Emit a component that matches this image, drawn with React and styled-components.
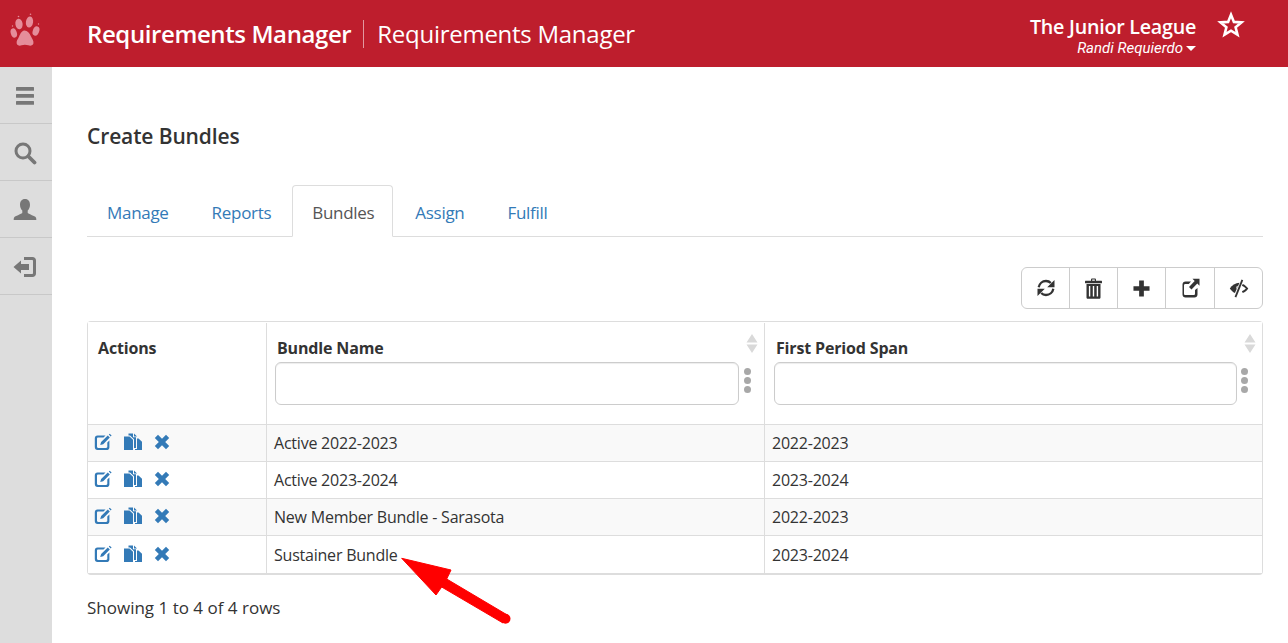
import React from "react";
import styled, { createGlobalStyle } from "styled-components";

const Global = createGlobalStyle`
  html, body { margin: 0; padding: 0; background: #fff; }
  body { font-family: "Open Sans", "Noto Sans", "Liberation Sans", sans-serif; color: #333; font-size: 16px; }
  * { box-sizing: border-box; }
`;

const Page = styled.div`
  position: relative;
  width: 1288px;
  height: 643px;
  overflow: hidden;
  display: grid;
  grid-template-rows: 67px 1fr;
  grid-template-columns: 52px 1fr;
`;
const Header = styled.header`
  grid-column: 1 / 3;
  background: #be1e2d;
  color: #fff;
  display: flex;
  align-items: center;
`;
const LogoCell = styled.div`
  width: 87px;
  height: 100%;
  display: flex;
  padding: 13px 0 0 10px;
`;
const AppTitle = styled.div`
  display: flex;
  align-items: center;
  font-size: 24px;
  height: 28px;
  margin-top: 1px;
`;
const AppStrong = styled.span`
  font-weight: 600;
  letter-spacing: -0.4px;
  padding-right: 12px;
  border-right: 1px solid rgba(255, 255, 255, 0.55);
  line-height: 28px;
`;
const AppSub = styled.span`
  padding-left: 13px;
  letter-spacing: -0.27px;
  line-height: 28px;
`;
const UserBlock = styled.div`
  margin-left: auto;
  display: flex;
  flex-direction: column;
  align-items: flex-end;
  margin-top: 3px;
`;
const League = styled.div`
  font-size: 19.7px;
  font-weight: 600;
  letter-spacing: -0.25px;
  line-height: 26px;
  white-space: nowrap;
`;
const UserName = styled.div`
  display: flex;
  align-items: center;
  gap: 3px;
  font-family: "Roboto", sans-serif;
  font-style: italic;
  font-size: 15px;
  line-height: 17px;
  white-space: nowrap;
`;
const Caret = styled.i`
  width: 0;
  height: 0;
  border-left: 5px solid transparent;
  border-right: 5px solid transparent;
  border-top: 5px solid #fff;
  margin-top: 1px;
`;
const StarCell = styled.div`
  width: 92px;
  height: 100%;
  padding: 11px 0 0 21px;
`;

const Sidebar = styled.nav`
  background: #dddddd;
`;
const SideItem = styled.div`
  height: 57px;
  border-bottom: 1px solid #c8c8c8;
  display: flex;
  align-items: center;
  justify-content: center;
  color: #777;
  padding: 2px 3px 0 0;
`;

const Main = styled.main`
  padding: 56px 25px 0 35px;
  min-width: 0;
`;
const Title = styled.h1`
  margin: 0;
  font-size: 21px;
  font-weight: 600;
  letter-spacing: -0.12px;
  line-height: 26px;
  color: #333;
`;
const Tabs = styled.div`
  display: flex;
  margin-top: 36px;
  height: 52px;
  border-bottom: 1px solid #ddd;
`;
const Tab = styled.div`
  height: 52px;
  padding: 3px ${p => p.$pr || 20}px 0 ${p => p.$pl || 20}px;
  display: flex;
  align-items: center;
  font-size: 17px;
  letter-spacing: -0.3px;
  color: ${p => (p.$active ? "#555" : "#337ab7")};
  background: ${p => (p.$active ? "#fff" : "transparent")};
  border: 1px solid ${p => (p.$active ? "#ddd" : "transparent")};
  border-bottom-color: ${p => (p.$active ? "#fff" : "transparent")};
  border-radius: 4px 4px 0 0;
  &:first-child { margin-left: -1px; }
`;
const ToolRow = styled.div`
  display: flex;
  justify-content: flex-end;
  margin-top: 30px;
`;
const ToolGroup = styled.div`
  display: flex;
  height: 42px;
  border: 1px solid #ccc;
  border-radius: 6px;
`;
const ToolBtn = styled.div`
  width: ${p => p.$w}px;
  display: flex;
  align-items: center;
  justify-content: center;
  color: #333;
  & + & { border-left: 1px solid #ccc; }
`;
const TableWrap = styled.div`
  margin-top: 12px;
  border: 1px solid #ddd;
  border-bottom-width: 2px;
  border-radius: 4px;
`;
const Row = styled.div`
  display: grid;
  grid-template-columns: 178px 498px 1fr;
  height: ${p => p.$h || 37}px;
  line-height: 36px;
  background: ${p => (p.$striped ? "#f9f9f9" : "#fff")};
  border-top: 1px solid ${p => (p.$first ? "transparent" : "#ddd")};
  &:last-child { height: 38px; line-height: 38px; }
`;
const HeadCell = styled.div`
  position: relative;
  padding: ${p => (p.$plain ? "15px 10px" : `15px 8px 0 ${p.$left || 8}px`)};
  & + & { border-left: 1px solid #ddd; }
`;
const HeadLabel = styled.div`
  font-weight: 700;
  font-size: 16px;
  letter-spacing: -0.16px;
  line-height: 21px;
  padding-left: ${p => (p.$inset ? 2 : 0)}px;
`;
const FilterRow = styled.div`
  display: flex;
  align-items: center;
  margin-top: 3px;
`;
const FilterInput = styled.input`
  flex: none;
  width: ${p => p.$w}px;
  height: 43px;
  border: 1px solid #ccc;
  border-radius: 6px;
  box-shadow: inset 0 1px 1px rgba(0, 0, 0, 0.075);
  background: #fff;
`;
const Kebab = styled.div`
  margin-left: ${p => p.$ml || 4}px;
  width: 8px;
  display: flex;
  flex-direction: column;
  gap: 2px;
  align-items: center;
  margin-top: -7px;
  & > i {
    width: 7px;
    height: 7px;
    border-radius: 50%;
    background: #a8a8a8;
  }
`;
const SortMark = styled.svg`
  position: absolute;
  top: 11px;
  right: 6px;
`;
const Cell = styled.div`
  padding: 0 7px;
  font-size: 16px;
  letter-spacing: -0.22px;
  white-space: nowrap;
  & + & { border-left: 1px solid #ddd; }
`;
const ActionCell = styled(Cell)`
  display: flex;
  align-items: center;
  gap: 12px;
  padding: 0 0 3px 6px;
  color: #337ab7;
`;
const Footer = styled.div`
  margin-top: 21px;
  font-size: 17px;
  line-height: 24px;
`;
const Arrow = styled.svg`
  position: absolute;
  left: 390px;
  top: 550px;
`;

const Paw = () => (
  <svg width="32" height="38" viewBox="0 0 32 38" fill="#e58d9a" aria-hidden="true">
    <ellipse cx="9" cy="11" rx="3.6" ry="5.4" transform="rotate(-10 9 11)" />
    <ellipse cx="19.5" cy="9" rx="3.6" ry="5.6" transform="rotate(8 19.5 9)" />
    <ellipse cx="3.8" cy="20" rx="3" ry="4.8" transform="rotate(-18 3.8 20)" />
    <ellipse cx="26" cy="18" rx="3.2" ry="4.8" transform="rotate(20 26 18)" />
    <path d="M14.5 17.5c3 0 5 2.500 6.500 6 1.200 2.600 3 4.400 2.400 7-.5 2-3 2.600-5 1.800-2.400-.9-4.600-.9-6.800 0-2.200.8-4.400.2-4.900-1.800-.6-2.600 1.200-4.200 2.400-7 1.400-3.400 3-6 5.800-6z" />
    <circle cx="8.500" cy="3.500" r=".8" /><circle cx="20.500" cy="1.200" r=".8" /><circle cx="2.500" cy="13" r=".7" /><circle cx="28.500" cy="11" r=".7" />
  </svg>
);
const Star = () => (
  <svg width="28" height="28" viewBox="0 0 28 28" aria-hidden="true">
    <path d="M14 3.800l2.900 7.100 7.600.5-5.900 4.900 1.900 7.400L14 19.700l-6.500 4 1.900-7.400-5.900-4.900 7.600-.5z" fill="none" stroke="#fff" strokeWidth="2.600" />
  </svg>
);
const Bars = () => (
  <svg width="20" height="20" viewBox="0 0 20 20" fill="currentColor" aria-hidden="true">
    <rect x="1" y="1" width="18" height="3.800" rx=".5" /><rect x="1" y="8" width="18" height="3.800" rx=".5" /><rect x="1" y="15" width="18" height="3.800" rx=".5" />
  </svg>
);
const Search = () => (
  <svg width="24" height="24" viewBox="0 0 24 24" fill="none" stroke="currentColor" aria-hidden="true">
    <circle cx="10" cy="10" r="7" strokeWidth="3" /><path d="M15.500 15.500l6 6" strokeWidth="3.800" strokeLinecap="round" />
  </svg>
);
const User = () => (
  <svg width="24" height="24" viewBox="0 0 24 24" fill="currentColor" aria-hidden="true">
    <path d="M12 1c3.400 0 5 2.600 5 5.800 0 2.400-.9 4.600-2.300 5.800v2.200c0 1 5.400 2.600 7.600 4 1 .7 1 2.200 1 3.200H.7c0-1 0-2.500 1-3.200 2.200-1.400 7.600-3 7.600-4v-2.200C7.900 11.400 7 9.200 7 6.800 7 3.600 8.600 1 12 1z" />
  </svg>
);
const LogIn = () => (
  <svg width="24" height="22" viewBox="0 0 24 22" fill="currentColor" aria-hidden="true">
    <path d="M11 1h8.500c2 0 3.500 1.500 3.500 3.500v13c0 2-1.500 3.500-3.500 3.500H11v-3h8c.6 0 1-.4 1-1V5c0-.6-.4-1-1-1h-8z" />
    <path d="M.5 11l7.500-6.500V8h8v6H8v3.500z" />
  </svg>
);
const Refresh = () => (
  <svg width="18" height="18" viewBox="0 0 18 18" aria-hidden="true">
    <g fill="none" stroke="currentColor" strokeWidth="2.300">
      <path d="M1.700 8.300C2.300 4.700 5.300 2 9 2c2 0 3.600.7 4.800 2" />
      <path d="M16.300 9.700C15.700 13.300 12.700 16 9 16c-2 0-3.600-.7-4.800-2" />
    </g>
    <path d="M17.500 1v7.300h-7.300zM.5 17V9.700h7.300z" fill="currentColor" />
  </svg>
);
const Trash = () => (
  <svg width="17" height="21" viewBox="0 0 17 21" fill="currentColor" aria-hidden="true">
    <path d="M6 3V1.500C6 .8 6.500.4 7.200.4h2.600c.7 0 1.200.4 1.200 1.100V3H9.800V1.600H7.200V3z" />
    <rect x="0" y="2.800" width="17" height="2.400" rx=".5" />
    <path fillRule="evenodd" d="M1.500 6h14v13.500c0 .8-.6 1.300-1.300 1.300H2.800c-.7 0-1.300-.5-1.300-1.300zM3.900 8v10.500h1.400V8zm3.900 0v10.500h1.400V8zm3.900 0v10.500h1.400V8z" />
  </svg>
);
const Plus = () => (
  <svg width="17" height="17" viewBox="0 0 18 18" fill="currentColor" aria-hidden="true">
    <path d="M6.500 .5h5v6h6v5h-6v6h-5v-6h-6v-5h6z" />
  </svg>
);
const Share = () => (
  <svg width="19" height="20" viewBox="0 0 19 20" fill="currentColor" aria-hidden="true">
    <path d="M3.500 3.500H10L7.800 6H4.300C3.600 6 3 6.600 3 7.300v8.400C3 16.400 3.600 17 4.300 17h8.400c.7 0 1.300-.6 1.300-1.300V12l2.500-2v6.500c0 1.700-1.300 3-3 3h-9c-1.700 0-3-1.300-3-3v-10c0-1.700 1.300-3 3-3z" />
    <path d="M11.500 .8h7v7l-2.200-2.200L10.500 11.500 8 9l5.700-6z" />
  </svg>
);
const EyeClose = () => (
  <svg width="20" height="19" viewBox="0 0 20 19" aria-hidden="true">
    <path fill="currentColor" d="M10.500 3.800C6.400 3.900 2.900 6.300.8 9.500c1.200 1.900 3 3.500 5.100 4.600z" />
    <path fill="#fff" d="M7.300 7.800L9 6.800 7.700 10.600z" />
    <path fill="currentColor" d="M12.500 .5l1.700.7-6.900 17.300-1.700-.7z" />
    <path fill="currentColor" d="M13.800 5c2.200 1 4.100 2.600 5.500 4.500-1.400 2-3.300 3.500-5.500 4.500l-.9-1.800c1.600-.7 3-1.700 4-2.700-1-1-2.400-2-4-2.700z" />
  </svg>
);
const Edit = () => (
  <svg width="18" height="18" viewBox="0 0 18 18" fill="currentColor" aria-hidden="true">
    <path d="M3.500 2.500h8L9.500 4.600H4.200C3.500 4.600 3 5.100 3 5.800v7.900c0 .7.500 1.200 1.200 1.200h7.900c.7 0 1.200-.5 1.200-1.200V9.500l2.100-2.100v7c0 1.700-1.300 2.600-3 2.600H3.500C1.800 17 .8 15.700.8 14V5.300c0-1.700 1-2.800 2.700-2.800z" />
    <path d="M13.800 2.600l2 2L9.200 11.200l-3 .9.900-3zM14.800 1.600l.9-.9 1.900 1.900-.9.900z" />
  </svg>
);
const Copy = () => (
  <svg width="18" height="18" viewBox="0 0 18 18" fill="currentColor" aria-hidden="true">
    <path d="M0 3.500h5.500L9 6.800V17H0z" />
    <path d="M4.500 .5H9v3.800h3V15h-2V6.300L6 2.500H4.500z" />
    <path d="M13 5.500h1.500L18 8.800V17h-7v-1h2z" />
    <path d="M10 .5l3 3h-3z" />
  </svg>
);
const Remove = () => (
  <svg width="17" height="16" viewBox="0 0 17 16" fill="currentColor" aria-hidden="true">
    <path d="M4 .8l4 4 4-4L15.200 4l-4 4 4 4-3.200 3.200-4-4-4 4L.8 12l4-4-4-4z" />
  </svg>
);
const Sort = () => (
  <SortMark width="12" height="19" viewBox="0 0 12 19" fill="#d9d9d9" aria-hidden="true">
    <path d="M6 0l5.500 8.500H.5zM6 19l5.500-8.500H.5z" />
  </SortMark>
);

const rows = [
  ["Active 2022-2023", "2022-2023"],
  ["Active 2023-2024", "2023-2024"],
  ["New Member Bundle - Sarasota", "2022-2023"],
  ["Sustainer Bundle", "2023-2024"],
];

export default function App() {
  return (
    <Page>
      <Global />
      <Header>
        <LogoCell><Paw /></LogoCell>
        <AppTitle>
          <AppStrong>Requirements Manager</AppStrong>
          <AppSub>Requirements Manager</AppSub>
        </AppTitle>
        <UserBlock>
          <League>The Junior League</League>
          <UserName>Randi Requierdo<Caret /></UserName>
        </UserBlock>
        <StarCell><Star /></StarCell>
      </Header>
      <Sidebar>
        <SideItem><Bars /></SideItem>
        <SideItem><Search /></SideItem>
        <SideItem><User /></SideItem>
        <SideItem><LogIn /></SideItem>
      </Sidebar>
      <Main>
        <Title>Create Bundles</Title>
        <Tabs>
          <Tab $pr={21}>Manage</Tab>
          <Tab>Reports</Tab>
          <Tab $active $pl={19} $pr={18}>Bundles</Tab>
          <Tab $pl={21} $pr={21}>Assign</Tab>
          <Tab>Fulfill</Tab>
        </Tabs>
        <ToolRow>
          <ToolGroup>
            <ToolBtn $w={47}><Refresh /></ToolBtn>
            <ToolBtn $w={48}><Trash /></ToolBtn>
            <ToolBtn $w={48}><Plus /></ToolBtn>
            <ToolBtn $w={49}><Share /></ToolBtn>
            <ToolBtn $w={48}><EyeClose /></ToolBtn>
          </ToolGroup>
        </ToolRow>
        <TableWrap>
          <Row $first $h={102}>
            <HeadCell $plain><HeadLabel>Actions</HeadLabel></HeadCell>
            <HeadCell>
              <HeadLabel $inset>Bundle Name</HeadLabel>
              <FilterRow><FilterInput $w={464} /><Kebab><i /><i /><i /></Kebab></FilterRow>
              <Sort />
            </HeadCell>
            <HeadCell $left={9}>
              <HeadLabel $inset>First Period Span</HeadLabel>
              <FilterRow><FilterInput $w={463} /><Kebab $ml={3}><i /><i /><i /></Kebab></FilterRow>
              <Sort />
            </HeadCell>
          </Row>
          {rows.map((r, i) => (
            <Row key={r[0]} $striped={i % 2 === 0}>
              <ActionCell><Edit /><Copy /><Remove /></ActionCell>
              <Cell>{r[0]}</Cell>
              <Cell>{r[1]}</Cell>
            </Row>
          ))}
        </TableWrap>
        <Footer>Showing 1 to 4 of 4 rows</Footer>
      </Main>
      <Arrow width="130" height="80" viewBox="390 550 130 80" aria-hidden="true">
        <path d="M401.700 558.300L451 570 446.700 579 506.500 614.500 503 623 441.700 587 436 595z" fill="#ff0000" stroke="#ff0000" strokeWidth="1" strokeLinejoin="round" />
        <circle cx="505.500" cy="618.700" r="5" fill="#ff0000" />
      </Arrow>
    </Page>
  );
}
